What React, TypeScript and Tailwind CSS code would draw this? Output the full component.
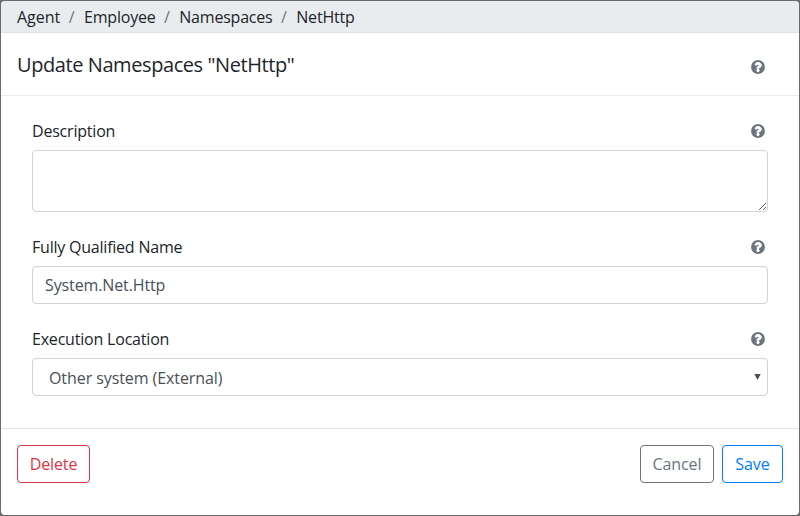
import type { ReactNode } from "react";

function Help() {
  return (
    <svg viewBox="0 0 512 512" className="h-[14px] w-[14px] shrink-0" role="img" aria-label="Help">
      <circle cx="256" cy="256" r="254" className="fill-[#6c757d]" />
      <path
        className="fill-white stroke-white"
        strokeWidth="36"
        d="M262.7 90c-54.5 0-89.3 23-116.5 63.8-3.5 5.3-2.4 12.4 2.7 16.3l34.7 26.3c5.2 3.9 12.6 3 16.7-2.1 17.9-22.7 30.1-35.8 57.3-35.8 20.4 0 45.7 13.1 45.7 33 0 15-12.4 22.7-32.5 34C247.1 238.5 216 254.9 216 296v4c0 6.6 5.4 12 12 12h56c6.6 0 12-5.4 12-12v-1.3c0-28.5 83.2-29.6 83.2-106.7 0-58-60.2-102-116.5-102zM256 338c-25.4 0-46 20.6-46 46s20.6 46 46 46 46-20.6 46-46-20.6-46-46-46z"
      />
    </svg>
  );
}

function Field({ label, tracking, children }: { label: string; tracking: string; children: ReactNode }) {
  return (
    <div>
      <div className="mb-[7px] flex h-6 items-center justify-between pr-[3px]">
        <label className={tracking}>{label}</label>
        <Help />
      </div>
      {children}
    </div>
  );
}

const crumbs = [
  { name: "Agent", tracking: "" },
  { name: "Employee", tracking: "tracking-[-0.2px]" },
  { name: "Namespaces", tracking: "tracking-[-0.2px]" },
  { name: "NetHttp", tracking: "tracking-[-0.2px]" },
];
const box = "w-full rounded border border-[#ced4da] bg-white text-[#495057]";
const button = "h-[38px] rounded border bg-white text-center";

export default function App() {
  return (
    <div className="h-[516px] w-[800px] bg-[#6b6b6d] p-px font-['Open_Sans',sans-serif] text-base leading-6 text-[#212529]">
      <div className="flex h-full flex-col overflow-hidden rounded bg-white">
        <nav className="flex h-8 shrink-0 items-center border-b border-[#dee2e6] bg-[#e9ecef] px-4">
          {crumbs.map((c, i) => (
            <span key={c.name} className="flex">
              {i > 0 && <span className="w-[23.7px] pr-px text-center text-[#6c757d]">/</span>}
              <span className={c.tracking}>{c.name}</span>
            </span>
          ))}
        </nav>
        <header className="flex h-[63px] shrink-0 items-center justify-between border-b border-[#e9ecef] pr-[34px] pl-4">
          <h5 className="pt-0.5 text-xl leading-[30px] tracking-[-0.42px]">Update Namespaces "NetHttp"</h5>
          <span className="pt-[5px]"><Help /></span>
        </header>
        <main className="flex flex-1 flex-col gap-[23px] px-[31px] pt-[23px]">
          <Field label="Description" tracking="tracking-[-0.2px]">
            <textarea className={`${box} block h-[62px] resize-y px-3 py-1.5`} />
          </Field>
          <Field label="Fully Qualified Name" tracking="tracking-[-0.22px]">
            <input className={`${box} block h-[38px] px-3 tracking-[-0.12px]`} defaultValue="System.Net.Http" />
          </Field>
          <Field label="Execution Location" tracking="tracking-[-0.2px]">
            <div className={`${box} flex h-[38px] items-center justify-between pr-[6px] pl-4`}>
              <span className="pt-0.5 tracking-[-0.08px]">Other system (External)</span>
              <svg viewBox="0 0 7 6" className="h-[6px] w-[7px] fill-[#495057]"><path d="M0.3 0H6.7L3.5 6Z" /></svg>
            </div>
          </Field>
        </main>
        <footer className="mx-px flex h-[87px] shrink-0 items-start justify-between border-t border-[#e0e2e4] px-[15px] pt-4">
          <button className={`${button} w-[73px] border-[#dc3545] tracking-[-0.1px] text-[#dc3545]`}>Delete</button>
          <div className="flex gap-2">
            <button className={`${button} w-[74px] border-[#6c757d] tracking-[-0.1px] text-[#6c757d]`}>Cancel</button>
            <button className={`${button} w-[61px] border-[#007bff] text-[#007bff]`}>Save</button>
          </div>
        </footer>
      </div>
    </div>
  );
}
